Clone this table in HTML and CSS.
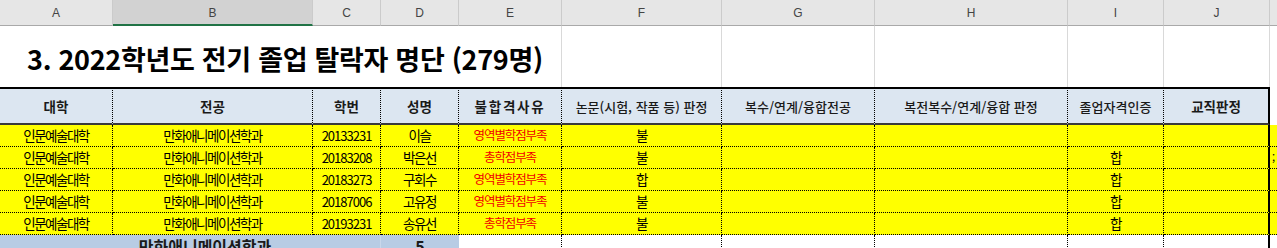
FILE: index.html
```html
<!DOCTYPE html>
<html lang="ko">
<head>
<meta charset="utf-8">
<title>2022학년도 전기 졸업 탈락자 명단</title>
<link rel="stylesheet" href="styles.css">
</head>
<body>
<div class="sheet">
  <div class="row colhead">
    <div class="ch">A</div>
    <div class="ch sel">B</div>
    <div class="ch">C</div>
    <div class="ch">D</div>
    <div class="ch">E</div>
    <div class="ch">F</div>
    <div class="ch">G</div>
    <div class="ch">H</div>
    <div class="ch">I</div>
    <div class="ch">J</div>
    <div class="ch last"></div>
  </div>

  <div class="row title-row">
    <div class="tc title">3. 2022학년도 전기 졸업 탈락자 명단 (279명)</div>
    <div class="tc"></div>
    <div class="tc"></div>
    <div class="tc"></div>
    <div class="tc"></div>
    <div class="tc jcol"></div>
    <div class="tc last"></div>
  </div>

  <div class="row head-row">
    <div class="hc">대학</div>
    <div class="hc">전공</div>
    <div class="hc">학번</div>
    <div class="hc">성명</div>
    <div class="hc reason">불합격사유</div>
    <div class="hc light">논문(시험, 작품 등) 판정</div>
    <div class="hc light">복수/연계/융합전공</div>
    <div class="hc light">복전복수/연계/융합 판정</div>
    <div class="hc light">졸업자격인증</div>
    <div class="hc jcol">교직판정</div>
    <div class="hc last"></div>
  </div>

  <div class="row data-row">
    <div class="dc">인문예술대학</div>
    <div class="dc">만화애니메이션학과</div>
    <div class="dc num">20133231</div>
    <div class="dc">이슬</div>
    <div class="dc red">영역별학점부족</div>
    <div class="dc">불</div>
    <div class="dc"></div>
    <div class="dc"></div>
    <div class="dc"></div>
    <div class="dc jcol"></div>
    <div class="dc last"></div>
  </div>
  <div class="row data-row">
    <div class="dc">인문예술대학</div>
    <div class="dc">만화애니메이션학과</div>
    <div class="dc num">20183208</div>
    <div class="dc">박은선</div>
    <div class="dc red">총학점부족</div>
    <div class="dc">불</div>
    <div class="dc"></div>
    <div class="dc"></div>
    <div class="dc">합</div>
    <div class="dc jcol"></div>
    <div class="dc last mark">;</div>
  </div>
  <div class="row data-row">
    <div class="dc">인문예술대학</div>
    <div class="dc">만화애니메이션학과</div>
    <div class="dc num">20183273</div>
    <div class="dc">구회수</div>
    <div class="dc red">영역별학점부족</div>
    <div class="dc">합</div>
    <div class="dc"></div>
    <div class="dc"></div>
    <div class="dc">합</div>
    <div class="dc jcol"></div>
    <div class="dc last"></div>
  </div>
  <div class="row data-row">
    <div class="dc">인문예술대학</div>
    <div class="dc">만화애니메이션학과</div>
    <div class="dc num">20187006</div>
    <div class="dc">고유정</div>
    <div class="dc red">영역별학점부족</div>
    <div class="dc">불</div>
    <div class="dc"></div>
    <div class="dc"></div>
    <div class="dc">합</div>
    <div class="dc jcol"></div>
    <div class="dc last"></div>
  </div>
  <div class="row data-row">
    <div class="dc">인문예술대학</div>
    <div class="dc">만화애니메이션학과</div>
    <div class="dc num">20193231</div>
    <div class="dc">송유선</div>
    <div class="dc red">총학점부족</div>
    <div class="dc">불</div>
    <div class="dc"></div>
    <div class="dc"></div>
    <div class="dc">합</div>
    <div class="dc jcol"></div>
    <div class="dc last"></div>
  </div>

  <div class="row sum-row">
    <div class="sc merged">만화애니메이션학과</div>
    <div class="sc count">5</div>
    <div class="sc blank"></div>
    <div class="sc blank"></div>
    <div class="sc blank"></div>
    <div class="sc blank"></div>
    <div class="sc blank"></div>
    <div class="sc blank jcol"></div>
    <div class="sc blank last"></div>
  </div>
</div>
</body>
</html>
```

FILE: styles.css
```css
* { box-sizing: border-box; margin: 0; padding: 0; }

html, body {
  width: 1277px;
  height: 248px;
  overflow: hidden;
  background: #ffffff;
}

body {
  font-family: "Noto Sans CJK KR", "Noto Sans", sans-serif;
  color: #000;
}

.sheet {
  width: 1277px;
}

.row {
  display: grid;
  grid-template-columns: 113px 200px 68px 78px 103px 160px 153px 193px 96px 106px 1fr;
}

/* column letter strip */
.colhead {
  height: 26px;
  background: #e6e6e6;
}
.ch {
  display: flex;
  align-items: center;
  justify-content: center;
  font-family: "Liberation Sans", "DejaVu Sans", sans-serif;
  font-size: 12px;
  color: #444;
  border-right: 1px solid #cbcbcb;
  border-bottom: 1px solid #a9a9a9;
  padding-top: 1px;
}
.ch.sel {
  background: #d2d2d2;
  border-bottom: 2px solid #217346;
}
.ch.last { border-right: none; }

/* title row */
.title-row {
  grid-template-columns: 562px 160px 153px 193px 96px 106px 1fr;
  height: 61px;
}
.tc {
  border-right: 1px solid #d9d9d9;
}
.tc.last { border-right: none; }
.title {
  display: flex;
  align-items: center;
  padding-left: 27px;
  padding-top: 4px;
  font-size: 27px;
  font-weight: 700;
  letter-spacing: -0.3px;
  white-space: nowrap;
}

/* header row */
.head-row {
  height: 38px;
}
.hc {
  display: flex;
  align-items: center;
  justify-content: center;
  background: #dce6f1;
  border-top: 2px solid #000;
  border-bottom: 2px solid #3a3a3a;
  border-right: 1px dotted #000;
  font-size: 13.5px;
  font-weight: 700;
  color: #1a1a1a;
  white-space: nowrap;
}
.hc.light { font-weight: 500; font-size: 13px; }
.hc.reason { letter-spacing: 1.8px; font-weight: 700; }
.hc.jcol { border-right: 2px solid #000; }
.hc.last {
  background: #fff;
  border: none;
}

/* data rows */
.data-row {
  height: 22px;
}
.dc {
  display: flex;
  align-items: center;
  justify-content: center;
  background: #ffff00;
  border-right: 1px dotted #000;
  border-bottom: 1px dotted #000;
  font-size: 13.5px;
  letter-spacing: -1.5px;
  white-space: nowrap;
  line-height: 1;
}
.dc.num { letter-spacing: -1px; font-size: 13px; }
.dc.red { color: #f00000; font-size: 12.5px; letter-spacing: -1.1px; }
.dc.jcol { border-right: 2px solid #000; }
.dc.last { border-right: none; }
.dc.mark {
  justify-content: flex-start;
  padding-left: 2px;
  font-size: 11px;
}

/* summary row */
.sum-row {
  grid-template-columns: 381px 78px 103px 160px 153px 193px 96px 106px 1fr;
  height: 22px;
}
.sc {
  display: flex;
  align-items: center;
  justify-content: center;
  font-size: 16px;
  font-weight: 700;
  color: #1a1a1a;
  white-space: nowrap;
  line-height: 1;
}
.sc.merged {
  background: #b8cce4;
  padding-left: 30px;
  border-right: 1px solid #c9d7ea;
}
.sc.count {
  background: #b8cce4;
}
.sc.blank {
  background: #fff;
  border-right: 1px dotted #000;
}
.sc.blank.jcol { border-right: 2px solid #000; }
.sc.blank.last { border-right: none; }
```
